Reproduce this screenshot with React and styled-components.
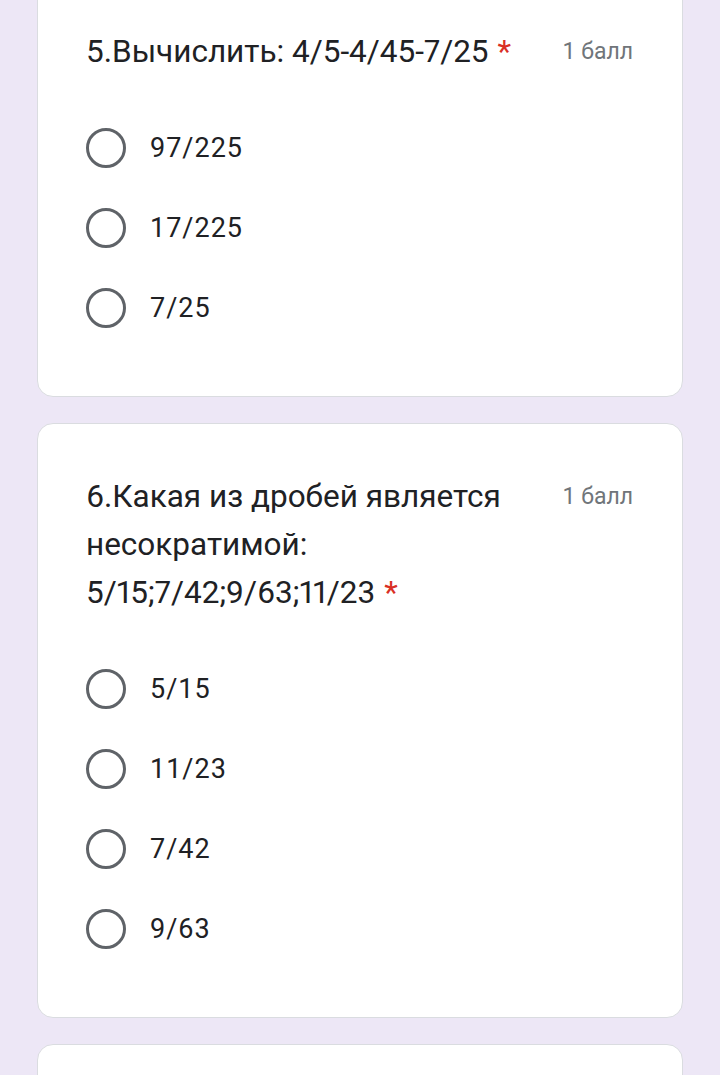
import React from "react";
import styled, { createGlobalStyle } from "styled-components";

const GlobalStyle = createGlobalStyle`
  html, body {
    margin: 0;
    padding: 0;
    background: #ede7f6;
  }
  body {
    font-family: Roboto, "Noto Sans", Arial, sans-serif;
    color: #202124;
    overflow: hidden;
  }
`;

const Page = styled.div`
  display: flex;
  flex-direction: column;
  gap: 26px;
  padding: 0 37px;
  margin-top: -22px;
  background: #ede7f6;
  min-height: 1200px;
`;

const Card = styled.div`
  background: #fff;
  border: 1px solid #dadce0;
  border-radius: 16px;
  padding: 49px 49px 48px 48px;
  min-height: ${(p) => (p.$empty ? "200px" : "auto")};
`;

const Header = styled.div`
  display: flex;
  align-items: flex-start;
  justify-content: space-between;
  gap: 24px;
`;

const Title = styled.div`
  flex: 1;
  font-size: 31.5px;
  line-height: 48px;
  color: #202124;
  font-variant-numeric: proportional-nums;
`;

const Required = styled.span`
  color: #d93025;
  margin-left: 9px;
`;

const Points = styled.div`
  font-size: 23px;
  line-height: 48px;
  color: #70757a;
  white-space: nowrap;
`;

const Options = styled.div`
  display: flex;
  flex-direction: column;
  margin-top: 32px;
`;

const Option = styled.label`
  display: flex;
  align-items: center;
  gap: 24px;
  height: 80px;
`;

const Radio = styled.span`
  box-sizing: border-box;
  width: 40px;
  height: 40px;
  border-radius: 50%;
  border: 3.5px solid #5f6368;
  flex-shrink: 0;
`;

const OptionText = styled.span`
  font-size: 27px;
  letter-spacing: 1px;
  color: #202124;
`;

const questions = [
  {
    title: "5.Вычислить: 4/5-4/45-7/25",
    options: ["97/225", "17/225", "7/25"],
  },
  {
    title: "6.Какая из дробей является несократимой: 5/15;7/42;9/63;11/23",
    options: ["5/15", "11/23", "7/42", "9/63"],
  },
];

export default function App() {
  return (
    <>
      <GlobalStyle />
      <Page>
        {questions.map((q) => (
          <Card key={q.title}>
            <Header>
              <Title>
                {q.title}
                <Required>*</Required>
              </Title>
              <Points>1 балл</Points>
            </Header>
            <Options>
              {q.options.map((o) => (
                <Option key={o}>
                  <Radio />
                  <OptionText>{o}</OptionText>
                </Option>
              ))}
            </Options>
          </Card>
        ))}
        <Card $empty />
      </Page>
    </>
  );
}
